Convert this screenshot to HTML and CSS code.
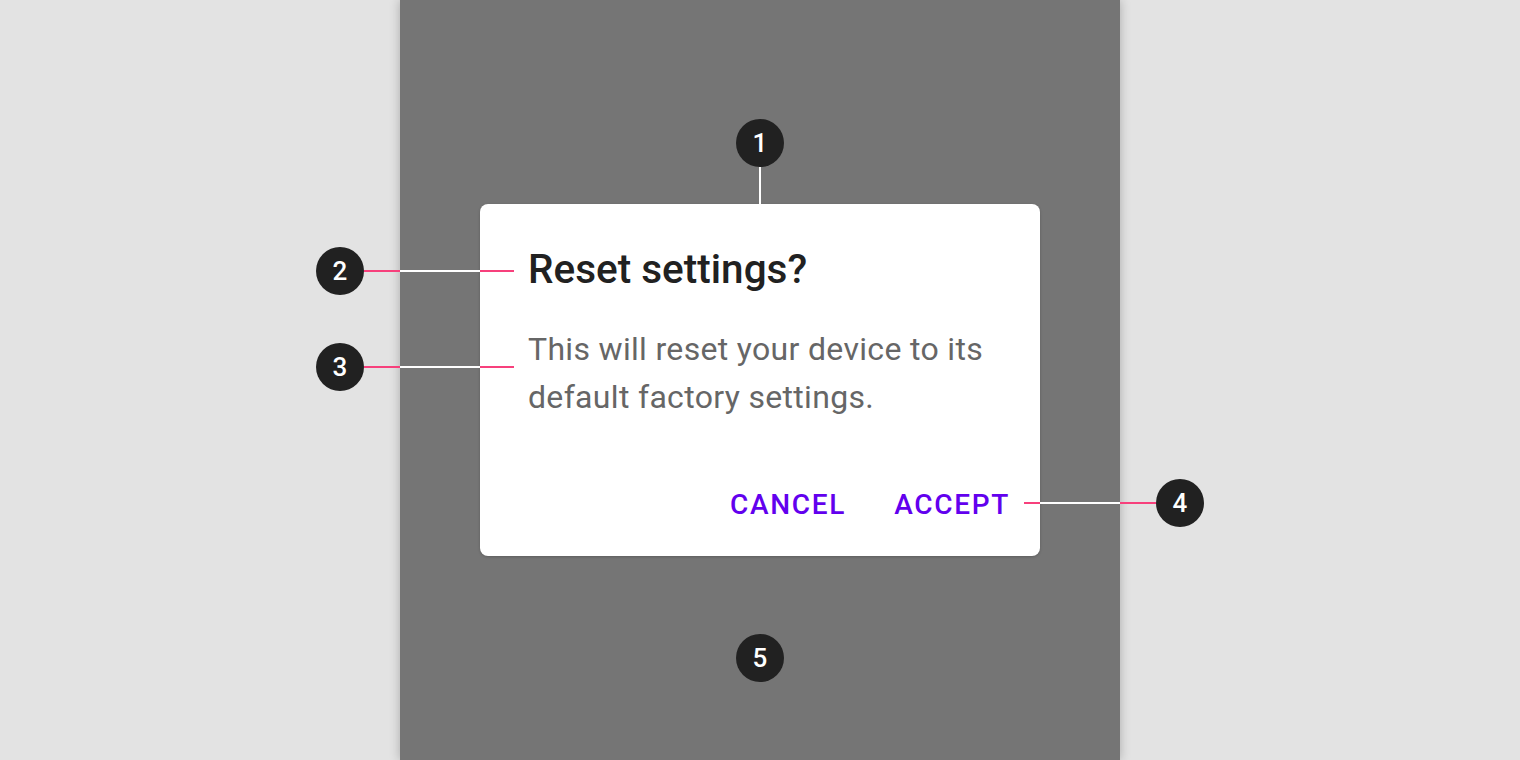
FILE: index.html
```html
<!DOCTYPE html>
<html lang="en">
<head>
    <meta charset="UTF-8">
    <meta name="viewport" content="width=device-width, initial-scale=1.0">
    <title>Dialog anatomy</title>
    <link rel="stylesheet" href="styles.css">
</head>
<body>
    <div class="ekran">
        <div class="dialog">
            <h2 class="tytul">Reset settings?</h2>
            <p class="tresc">This will reset your device to its default factory settings.</p>
            <div class="akcje">
                <button class="przycisk">Cancel</button>
                <button class="przycisk">Accept</button>
            </div>
        </div>
    </div>

    <!-- oznaczenia -->
    <div class="znacznik z1">1</div>
    <div class="linia pion l1"></div>
    <div class="znacznik z2">2</div>
    <div class="linia lewa l2"></div>
    <div class="znacznik z3">3</div>
    <div class="linia lewa l3"></div>
    <div class="znacznik z4">4</div>
    <div class="linia prawa l4"></div>
    <div class="znacznik z5">5</div>
</body>
</html>
```

FILE: styles.css
```css
body {
    font-family: Roboto, "Liberation Sans", sans-serif;
    display: flex;
    justify-content: center;
    margin: 0;
    height: 760px;
    overflow: hidden;
    background-color: #e3e3e3;
}
.ekran {
    width: 720px;
    height: 760px;
    background: #757575;
    box-shadow: 0 0 10px rgba(0, 0, 0, 0.25);
    display: flex;
    justify-content: center;
    align-items: center;
}
.dialog {
    background: #ffffff;
    width: 560px;
    border-radius: 8px;
    box-shadow: 0 1px 3px rgba(0, 0, 0, 0.2);
    box-sizing: border-box;
    padding-top: 41px;
}
.tytul {
    margin: 0 48px;
    font-size: 40.5px;
    font-weight: 500;
    line-height: 48px;
    color: #212121;
}
.tresc {
    margin: 32px 48px 0;
    font-size: 32px;
    line-height: 48px;
    color: #666666;
    letter-spacing: 0.32px;
}
.akcje {
    display: flex;
    justify-content: flex-end;
    gap: 16px;
    padding: 48px 14px 15px 16px;
}
.przycisk {
    font-family: inherit;
    font-size: 28px;
    font-weight: 500;
    text-transform: uppercase;
    letter-spacing: 1.7px;
    line-height: 72px;
    height: 72px;
    padding: 0 16px;
    background: none;
    border: none;
    color: #6200ee;
    cursor: pointer;
}

/* oznaczenia */
.znacznik {
    position: absolute;
    width: 48px;
    height: 48px;
    border-radius: 50%;
    background: #212121;
    color: #ffffff;
    font-size: 26px;
    font-weight: 500;
    line-height: 48px;
    text-align: center;
}
.z1 { left: 736px; top: 119px; }
.z2 { left: 316px; top: 247px; }
.z3 { left: 316px; top: 343px; }
.z4 { left: 1156px; top: 479px; }
.z5 { left: 736px; top: 634px; }
.linia {
    position: absolute;
    height: 2px;
}
.pion {
    width: 2px;
    height: 37px;
    background: #ffffff;
}
.l1 { left: 759px; top: 167px; }
.lewa {
    left: 364px;
    width: 150px;
    background: linear-gradient(to right, #f7407c 36px, #ffffff 36px, #ffffff 116px, #f7407c 116px);
}
.l2 { top: 270px; }
.l3 { top: 366px; }
.prawa {
    left: 1024px;
    width: 132px;
    top: 502px;
    background: linear-gradient(to right, #f7407c 16px, #ffffff 16px, #ffffff 96px, #f7407c 96px);
}
```
